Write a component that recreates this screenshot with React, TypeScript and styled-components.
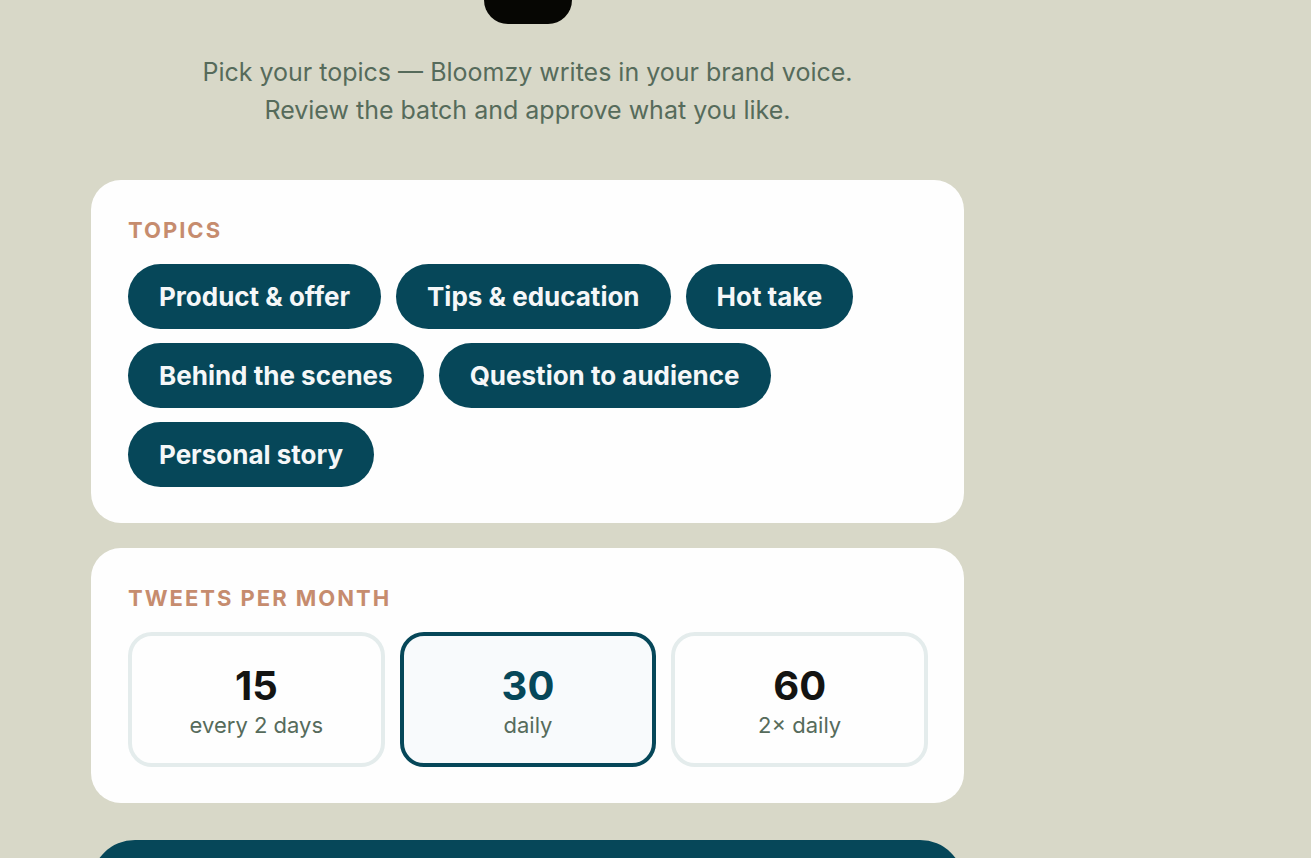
import { useState } from "react";
import styled, { createGlobalStyle } from "styled-components";

const GlobalStyle = createGlobalStyle`
  *, *::before, *::after { box-sizing: border-box; }
  body {
    margin: 0;
    background: #d8d8c8;
    color: #141412;
    font-family: Inter, "Liberation Sans", sans-serif;
  }
  button { font: inherit; cursor: pointer; }
`;

const Page = styled.div`
  height: 100vh;
  overflow: hidden;
  padding: 0 91px;
`;

const Column = styled.main`
  display: flex;
  flex-direction: column;
  max-width: 873px;
`;

const Badge = styled.div`
  align-self: center;
  width: 88px;
  height: 24px;
  border-radius: 0 0 24px 24px;
  background: #060603;
`;

const Intro = styled.p`
  margin: 29px 0 51px;
  color: #566b5b;
  font-size: 25px;
  line-height: 38px;
  text-align: center;
`;

const Card = styled.section`
  margin-bottom: 25px;
  padding: 37px 36px 36px 37px;
  border-radius: 30px;
  background: #fefefe;
`;

const CardTitle = styled.h2`
  margin: 0 0 20px;
  color: #c68c6e;
  font-size: 22px;
  font-weight: 700;
  line-height: 27px;
  letter-spacing: 2px;
  text-transform: uppercase;
`;

const Topics = styled.div`
  display: flex;
  flex-wrap: wrap;
  gap: 14px 15px;
`;

const Topic = styled.button<{ $on: boolean }>`
  height: 65px;
  padding: 0 31px;
  border: 0;
  border-radius: 33px;
  background: ${(p) => (p.$on ? "#064759" : "#e4ecec")};
  color: ${(p) => (p.$on ? "#f5f7f8" : "#064759")};
  && { font-size: 26px; font-weight: 700; }
`;

const Volumes = styled.div`
  display: grid;
  grid-template-columns: repeat(3, 1fr);
  gap: 15px;
`;

const Volume = styled.button<{ $on: boolean }>`
  display: flex;
  flex-direction: column;
  align-items: center;
  gap: 2px;
  padding: 26px 16px 24px;
  border: ${(p) => (p.$on ? "4px solid #064759" : "4px solid #e4ecec")};
  border-radius: 24px;
  background: ${(p) => (p.$on ? "#f8fafc" : "#fefefe")};
  color: ${(p) => (p.$on ? "#064759" : "#141412")};
`;

const Count = styled.strong`
  font-size: 40px;
  font-weight: 700;
  line-height: 48px;
`;

const Pace = styled.span`
  color: #566b5b;
  font-size: 22px;
  line-height: 27px;
`;

const Submit = styled.button`
  height: 88px;
  margin-top: 12px;
  border: 0;
  border-radius: 44px;
  background: #064759;
`;

const topics = [
  "Product & offer",
  "Tips & education",
  "Hot take",
  "Behind the scenes",
  "Question to audience",
  "Personal story",
];

const volumes = [
  { count: 15, pace: "every 2 days" },
  { count: 30, pace: "daily" },
  { count: 60, pace: "2× daily" },
];

export default function App() {
  const [picked, setPicked] = useState<string[]>(topics);
  const [volume, setVolume] = useState(30);

  const toggle = (topic: string) =>
    setPicked((now) =>
      now.includes(topic) ? now.filter((t) => t !== topic) : [...now, topic]
    );

  return (
    <Page>
      <GlobalStyle />
      <Column>
        <Badge />
        <Intro>
          Pick your topics — Bloomzy writes in your brand voice.
          <br />
          Review the batch and approve what you like.
        </Intro>
        <Card aria-labelledby="topics-title">
          <CardTitle id="topics-title">Topics</CardTitle>
          <Topics>
            {topics.map((topic) => (
              <Topic
                key={topic}
                type="button"
                $on={picked.includes(topic)}
                aria-pressed={picked.includes(topic)}
                onClick={() => toggle(topic)}
              >
                {topic}
              </Topic>
            ))}
          </Topics>
        </Card>
        <Card aria-labelledby="volume-title">
          <CardTitle id="volume-title">Tweets per month</CardTitle>
          <Volumes>
            {volumes.map(({ count, pace }) => (
              <Volume
                key={count}
                type="button"
                $on={volume === count}
                aria-pressed={volume === count}
                onClick={() => setVolume(count)}
              >
                <Count>{count}</Count>
                <Pace>{pace}</Pace>
              </Volume>
            ))}
          </Volumes>
        </Card>
        <Submit type="button" />
      </Column>
    </Page>
  );
}
